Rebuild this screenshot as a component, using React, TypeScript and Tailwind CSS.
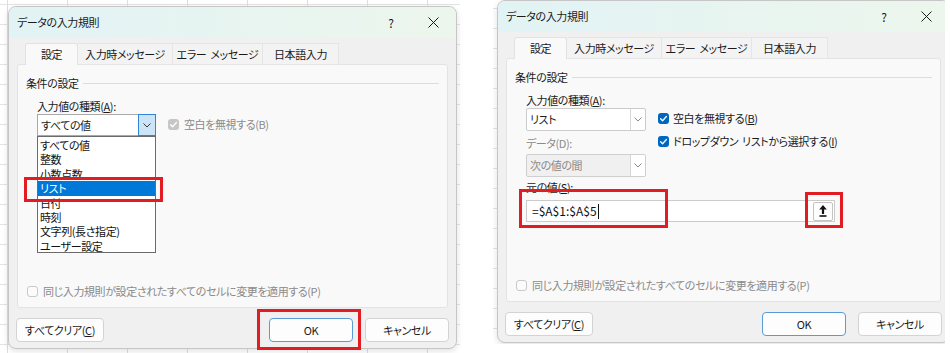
import React from "react";

function Check({ kind }: { kind: "on" | "disabledOn" | "off" }) {
  if (kind === "off")
    return <span className="inline-block w-[11px] h-[11px] rounded-[3px] border border-[#c9c9c9] bg-[#fbfbfb] shrink-0" />;
  const bg = kind === "on" ? "bg-[#0067c0]" : "bg-[#c6c6c6]";
  return (
    <span className={`inline-flex items-center justify-center w-[11px] h-[11px] rounded-[3px] shrink-0 ${bg}`}>
      <svg width="9" height="9" viewBox="0 0 9 9">
        <polyline points="1.6,4.7 3.6,6.7 7.4,2.5" fill="none" stroke="white" strokeWidth="1.3" strokeLinecap="round" strokeLinejoin="round" />
      </svg>
    </span>
  );
}

function Chevron({ color = "#5f5f5f" }: { color?: string }) {
  return (
    <svg width="8" height="5" viewBox="0 0 8 5">
      <polyline points="0.5,0.5 4,4 7.5,0.5" fill="none" stroke={color} strokeWidth="1" />
    </svg>
  );
}

function TitleBar() {
  return (
    <div className="h-[31px] flex items-center bg-[linear-gradient(to_right,#e2f3f5,#ecf6ec)] shrink-0">
      <span className="pl-[8px] text-[#1a1a1a]">データの入力規則</span>
      <div className="flex-1" />
      <span className="w-[38px] text-center text-[12px] text-[#1a1a1a]">?</span>
      <span className="w-[46px] flex justify-center">
        <svg width="11" height="11" viewBox="0 0 11 11">
          <path d="M0.5 0.5 L10.5 10.5 M10.5 0.5 L0.5 10.5" stroke="#1a1a1a" strokeWidth="1" />
        </svg>
      </span>
    </div>
  );
}

function Tabs() {
  return (
    <div className="mt-[5px] ml-[16px] flex h-[22px] relative z-10 -mb-px">
      <div className="w-[53px] h-[22px] flex items-center justify-center bg-[#f9f9f9] border border-b-0 border-[#e2e2e2] rounded-t-[3px] text-[#1a1a1a]">設定</div>
      <div className="w-[95px] h-[22px] flex items-center justify-center bg-[#f3f3f3] border border-l-0 border-[#e5e5e5] text-[#1a1a1a]">入力時メッセージ</div>
      <div className="w-[90px] h-[22px] flex items-center justify-center bg-[#f3f3f3] border border-l-0 border-[#e5e5e5] text-[#1a1a1a]">
        エラー<span className="ml-[4px]">メッセージ</span>
      </div>
      <div className="w-[76px] h-[22px] flex items-center justify-center bg-[#f3f3f3] border border-l-0 border-[#e5e5e5] text-[#1a1a1a]">日本語入力</div>
    </div>
  );
}

function Heading() {
  return (
    <div className="flex items-center pt-[10px] pl-[8px] pr-[8px] leading-[16px]">
      <span className="text-[#1a1a1a]">条件の設定</span>
      <div className="flex-1 h-px bg-[#dddddd] ml-[4px]" />
    </div>
  );
}

function BottomCheck() {
  return (
    <div className="mt-auto pb-[8px] pl-[9px] flex items-center gap-[5px] leading-[16px] text-[#8a8a8a]">
      <Check kind="off" />
      <span>同じ入力規則が設定されたすべてのセルに変更を適用する(P)</span>
    </div>
  );
}

function Buttons() {
  return (
    <div className="mt-[10px] h-[24px] flex px-[7px] shrink-0">
      <div className="w-[88px] h-[24px] flex items-center justify-center bg-[#fdfdfd] border border-[#d3d3d3] rounded-[4px] text-[#1a1a1a]">
        すべてクリア(<span className="underline">C</span>)
      </div>
      <div className="flex-1" />
      <div className="w-[84px] h-[24px] flex items-center justify-center bg-[#fdfdfd] border border-[#5a9ad8] rounded-[4px] text-[#1a1a1a]">OK</div>
      <div className="w-[84px] h-[24px] ml-[12px] flex items-center justify-center bg-[#fdfdfd] border border-[#d3d3d3] rounded-[4px] text-[#1a1a1a]">キャンセル</div>
    </div>
  );
}

const listItems = ["すべての値", "整数", "小数点数", "リスト", "日付", "時刻", "文字列(長さ指定)", "ユーザー設定"];

function LeftPanel() {
  return (
    <div className="mx-[8px] h-[244px] border border-[#e3e3e3] bg-[#f9f9f9] rounded-[3px] flex flex-col shrink-0">
      <Heading />
      <div className="pl-[19px] mt-[7px] leading-[16px] text-[#1a1a1a]">
        入力値の種類(<span className="underline">A</span>):
      </div>
      <div className="pl-[19px] flex items-start">
        <div className="relative w-[119px] h-[22px]">
          <div className="w-[119px] h-[22px] flex items-center bg-white border border-[#a9a9a9]">
            <span className="flex-1 pl-[3px] text-[#1a1a1a]">すべての値</span>
            <span className="w-[18px] h-[22px] -mr-px -my-px flex items-center justify-center bg-[#cce4f7] border border-[#2f86d8]">
              <Chevron color="#3a3a3a" />
            </span>
          </div>
          <div className="absolute left-0 top-full w-[119px] h-[117px] bg-white border border-[#6b6b6b] py-[1px]">
            {listItems.map((t) => (
              <div
                key={t}
                className={
                  t === "リスト"
                    ? "h-[14.4px] leading-[14.4px] pl-[2px] bg-[#0078d7] text-white"
                    : "h-[14.4px] leading-[14.4px] pl-[2px] text-[#111111]"
                }
              >
                {t}
              </div>
            ))}
          </div>
        </div>
        <div className="ml-[12px] mt-[2px] flex items-center gap-[5px] leading-[16px] text-[#8a8a8a]">
          <Check kind="disabledOn" />
          <span>空白を無視する(B)</span>
        </div>
      </div>
      <BottomCheck />
    </div>
  );
}

function RightPanel() {
  return (
    <div className="mx-[8px] h-[244px] border border-[#e3e3e3] bg-[#f9f9f9] rounded-[3px] flex flex-col shrink-0">
      <Heading />
      <div className="pl-[19px] mt-[7px] leading-[16px] text-[#1a1a1a]">
        入力値の種類(<span className="underline">A</span>):
      </div>
      <div className="pl-[19px] flex items-start">
        <div className="w-[120px] flex flex-col">
          <div className="w-[120px] h-[23px] flex items-center bg-white border border-[#cbcbcb] rounded-[2px]">
            <span className="flex-1 pl-[3px] text-[#1a1a1a]">リスト</span>
            <span className="w-[15px] h-[21px] flex items-center justify-center border-l border-[#d6d6d6]">
              <Chevron color="#8a8a8a" />
            </span>
          </div>
          <div className="mt-[4px] leading-[16px] text-[#8a8a8a]">データ(D):</div>
          <div className="mt-[3px] w-[120px] h-[23px] flex items-center bg-[#f0f0f0] border border-[#cfcfcf] rounded-[2px]">
            <span className="flex-1 pl-[3px] text-[#8a8a8a]">次の値の間</span>
            <span className="w-[15px] h-[21px] flex items-center justify-center border-l border-[#d6d6d6] bg-white">
              <Chevron color="#8a8a8a" />
            </span>
          </div>
        </div>
        <div className="ml-[12px] flex flex-col">
          <div className="mt-[2px] flex items-center gap-[4px] leading-[16px] text-[#1a1a1a]">
            <Check kind="on" />
            <span>
              空白を無視する(<span className="underline">B</span>)
            </span>
          </div>
          <div className="mt-[7px] flex items-center gap-[4px] leading-[16px] text-[#1a1a1a]">
            <Check kind="on" />
            <span>
              ドロップダウン<span className="ml-[4px]">リストから選択する(</span>
              <span className="underline">I</span>)
            </span>
          </div>
        </div>
      </div>
      <div className="pl-[19px] mt-[2px] leading-[16px] text-[#1a1a1a]">
        元の値(<span className="underline">S</span>):
      </div>
      <div className="ml-[19px] mt-[5px] w-[309px] h-[22px] flex items-center bg-white border border-[#cbcbcb]">
        <span className="pl-[5px] text-[12px] tracking-normal text-[#111111]">=$A$1:$A$5</span>
        <span className="w-px h-[15px] bg-[#111111] ml-[1px]" />
        <div className="flex-1" />
        <span className="w-[20px] h-[19px] mr-[1px] flex items-center justify-center bg-[#fdfdfd] border border-[#c3c3c3] rounded-[2px]">
          <svg width="8" height="12" viewBox="0 0 8 12">
            <polygon points="4,0 0.2,4.5 7.8,4.5" fill="#111111" />
            <rect x="2.9" y="4" width="2.2" height="5" fill="#111111" />
            <rect x="0.5" y="10.2" width="7" height="1.6" fill="#111111" />
          </svg>
        </span>
      </div>
      <BottomCheck />
    </div>
  );
}

function Dialog({ width, right }: { width: string; right?: boolean }) {
  return (
    <div
      className={`${width} h-[343px] rounded-[8px] border border-[#c6c6c6] bg-[#f0f0f0] shadow-[0_2px_6px_rgba(0,0,0,0.12)] overflow-hidden flex flex-col shrink-0`}
    >
      <TitleBar />
      <Tabs />
      {right ? <RightPanel /> : <LeftPanel />}
      <Buttons />
    </div>
  );
}

export default function App() {
  return (
    <div className="relative w-[950px] h-[353px] bg-white overflow-hidden font-['Noto_Sans_CJK_JP','Noto_Sans',sans-serif] [font-feature-settings:'palt'] text-[11px] tracking-[-0.4px]">
      <div className="flex items-start">
        <div className="w-[460px] h-[353px] pl-[8px] pt-[6px] bg-white bg-[linear-gradient(to_right,#dedede_1px,transparent_1px),linear-gradient(to_bottom,#e4e4e4_1px,transparent_1px)] bg-[length:60px_20px] bg-[position:7px_4px] shrink-0">
          <Dialog width="w-[449px]" />
        </div>
        <div className="w-[33px] shrink-0" />
        <div className="w-[452px] h-[344px] pl-[4px] overflow-hidden bg-white bg-[linear-gradient(to_bottom,#e4e4e4_1px,transparent_1px)] bg-[length:60px_20px] bg-[position:0px_8px] shrink-0">
          <Dialog width="w-[453px]" right />
        </div>
      </div>

      {/* red highlight boxes */}
      <div className="absolute left-[24px] top-[177px] w-[139px] h-[25px] border-[3px] border-[#e31b23]" />
      <div className="absolute left-[257px] top-[309px] w-[104px] h-[41px] border-[3px] border-[#e31b23]" />
      <div className="absolute left-[519px] top-[189px] w-[149px] h-[39px] border-[3px] border-[#e31b23]" />
      <div className="absolute left-[805px] top-[192px] w-[38px] h-[36px] border-[3px] border-[#e31b23]" />
    </div>
  );
}
